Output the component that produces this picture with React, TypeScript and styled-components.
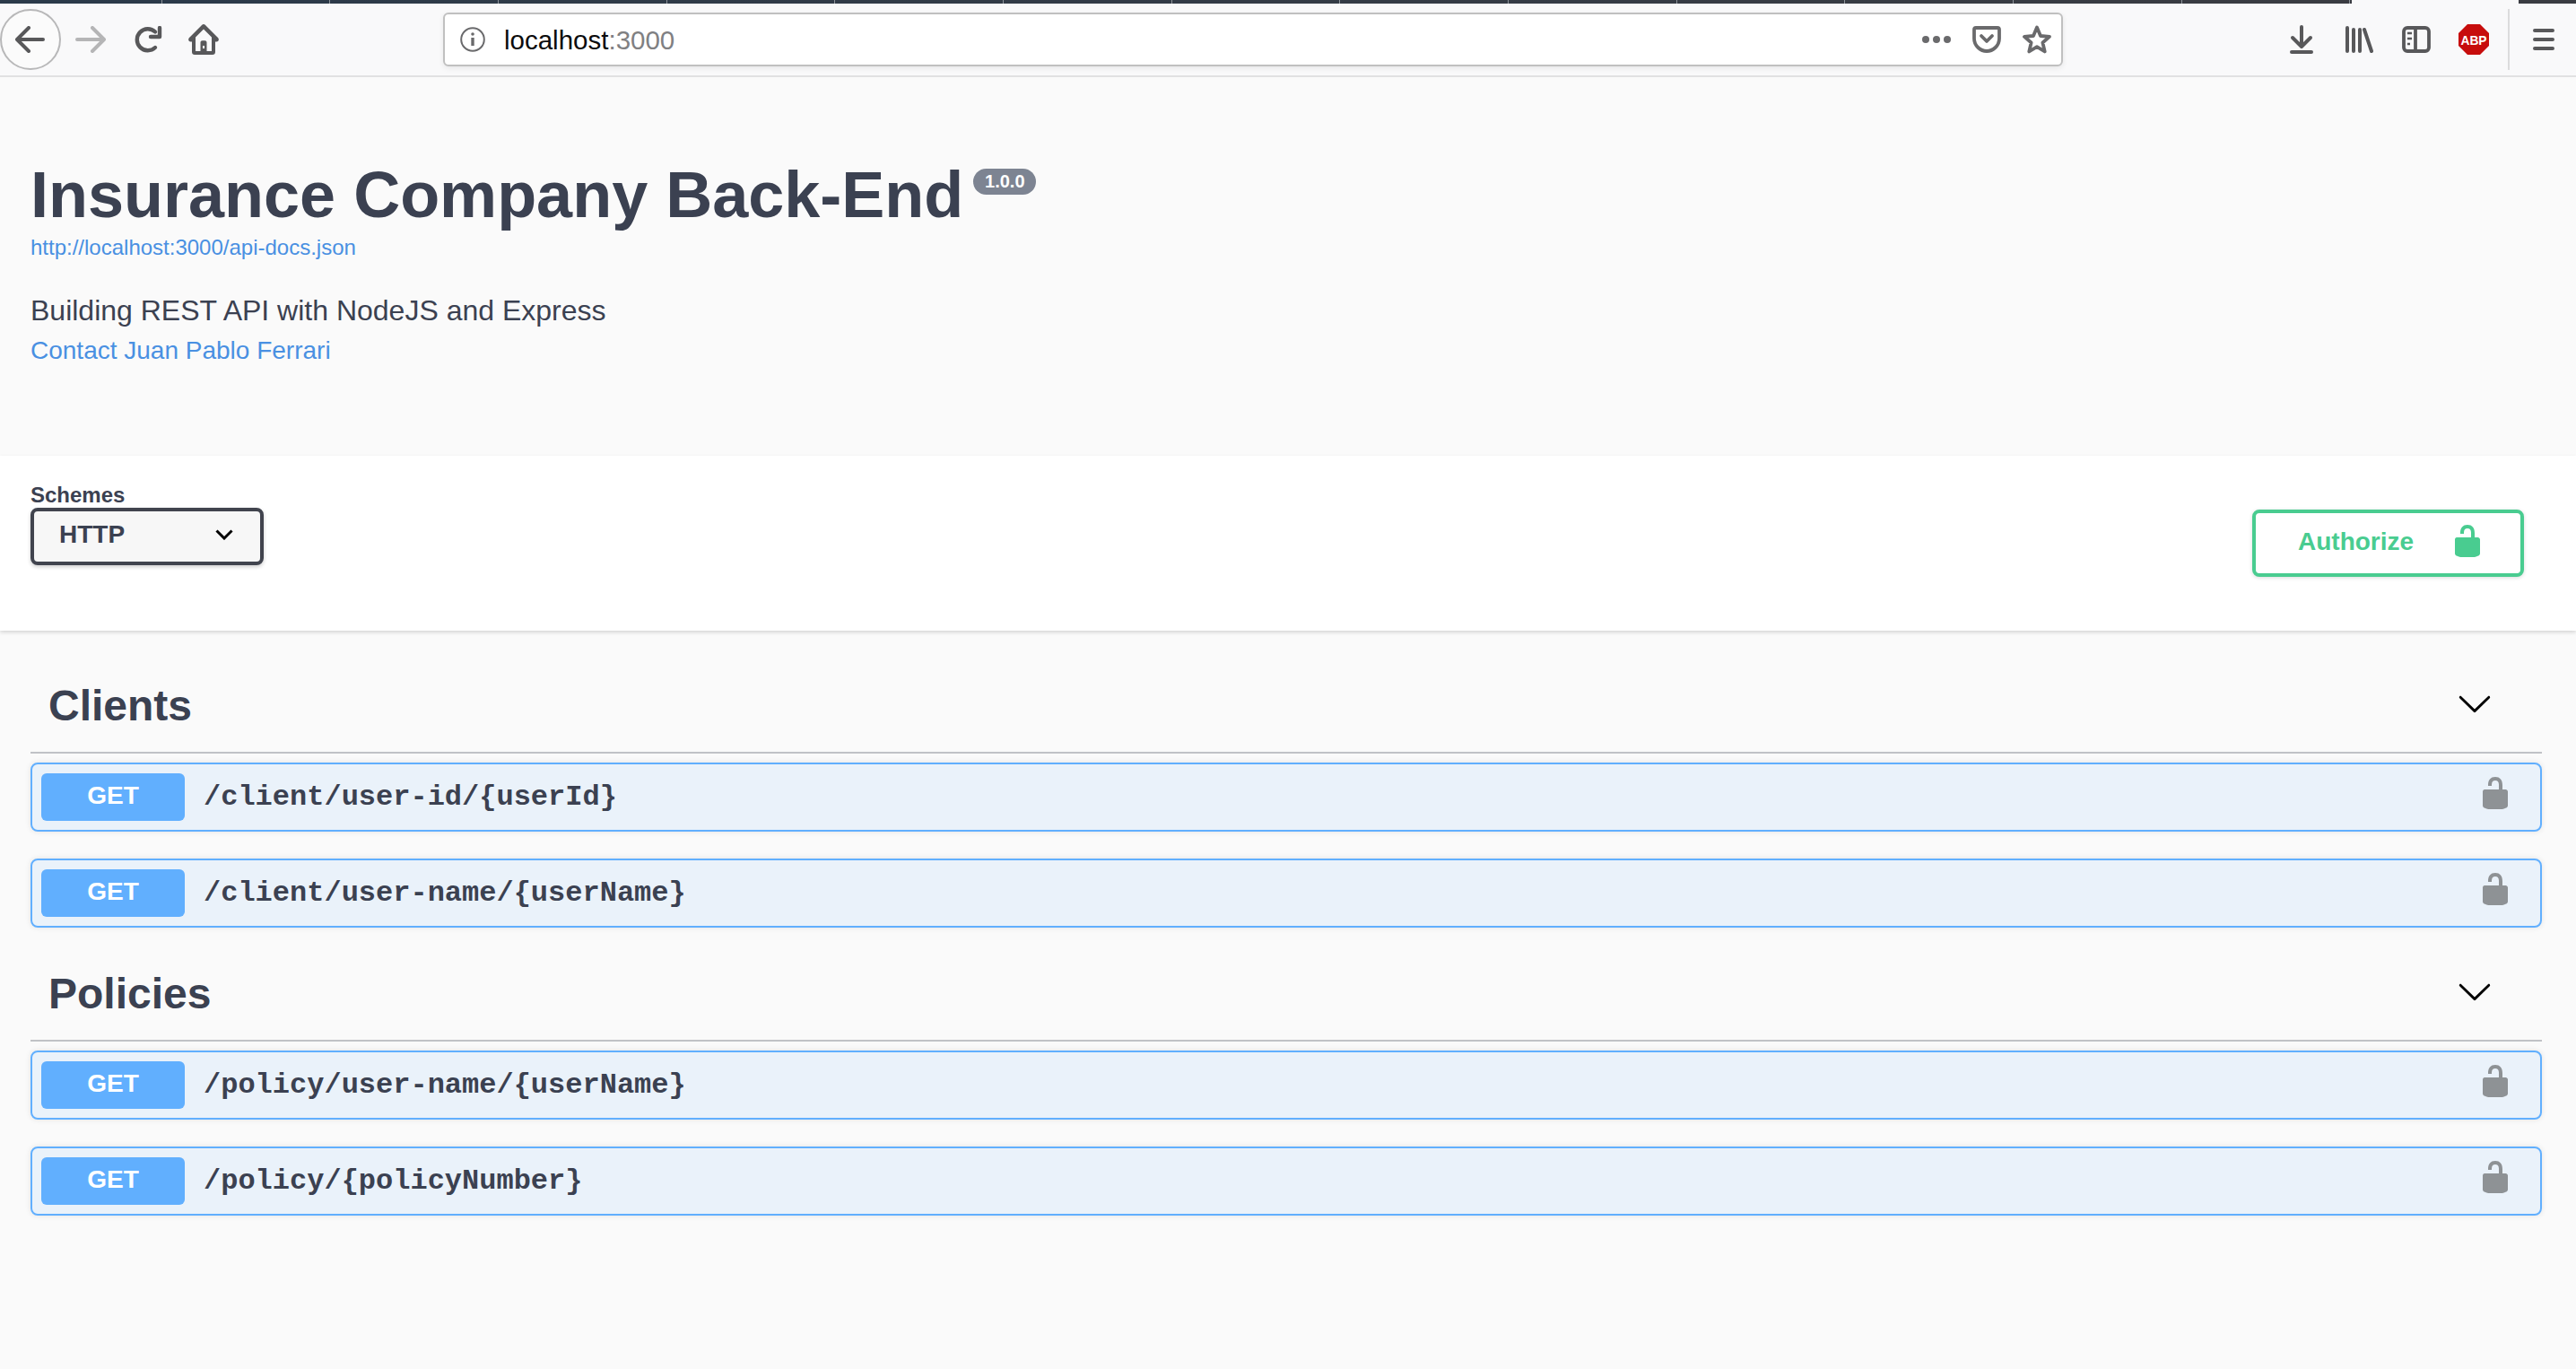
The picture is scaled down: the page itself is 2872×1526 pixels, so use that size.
import React from "react";
import styled, { createGlobalStyle } from "styled-components";

const Global = createGlobalStyle`
  html, body { margin: 0; padding: 0; background: #fafafa; }
  body { font-family: "Liberation Sans", Arial, sans-serif; color: #3b4151; }
`;

const Page = styled.div`
  min-height: 1526px;
  display: flex;
  flex-direction: column;
`;

const TabStrip = styled.div`
  height: 4px;
  display: flex;
  background: #f9f9fa;
`;
const TabRun = styled.div`
  width: 2622px;
  display: flex;
  background: linear-gradient(90deg, #2b3a4a, #3a3c42);
`;
const TabCell = styled.div<{ $w: number }>`
  width: ${(p) => p.$w}px;
  border-right: 1px solid #8d939a;
  box-sizing: border-box;
`;
const TabGap = styled.div`
  width: 186px;
`;
const TabEnd = styled.div`
  flex: 1;
  background: #3a3c42;
`;

const Toolbar = styled.div`
  height: 80px;
  box-sizing: content-box;
  background: #f9f9fa;
  border-bottom: 2px solid #e1e1e2;
  display: flex;
  align-items: center;
  position: relative;
`;
const BackCircle = styled.div`
  width: 68px;
  height: 68px;
  border: 2px solid #b8b8b9;
  border-radius: 50%;
  box-sizing: border-box;
  display: flex;
  align-items: center;
  justify-content: center;
  background: #fbfbfb;
`;
const NavSlot = styled.div<{ $w: number; $ml: number }>`
  width: ${(p) => p.$w}px;
  margin-left: ${(p) => p.$ml}px;
  height: 36px;
  display: flex;
  align-items: center;
  justify-content: center;
`;
const UrlBar = styled.div`
  margin-left: 250px;
  width: 1806px;
  height: 60px;
  box-sizing: border-box;
  background: #fff;
  border: 2px solid #c0c0c0;
  border-radius: 6px;
  box-shadow: 0 2px 6px rgba(0, 0, 0, 0.08);
  display: flex;
  align-items: center;
  padding: 0 11px 0 17px;
`;
const UrlText = styled.div`
  margin-left: 21px;
  padding-top: 1px;
  font-size: 29.5px;
  color: #0c0c0d;
  flex: 1;
`;
const UrlPort = styled.span`
  color: #808082;
`;
const UrlIcons = styled.div`
  display: flex;
  align-items: center;
  gap: 24px;
`;
const RightTools = styled.div`
  display: flex;
  align-items: center;
  margin-left: 253px;
`;
const ToolDivider = styled.div`
  width: 2px;
  height: 68px;
  background: #dcdcdd;
  margin: 0 26px 0 21px;
`;

const Info = styled.section`
  padding: 90px 34px 0;
  height: 332px;
  box-sizing: content-box;
`;
const TitleRow = styled.div`
  display: flex;
  align-items: flex-start;
`;
const Title = styled.h1`
  margin: 0;
  font-size: 72px;
  line-height: 82px;
  font-weight: 700;
  color: #3b4151;
`;
const VersionBadge = styled.span`
  margin: 12px 0 0 11px;
  height: 29px;
  width: 70px;
  border-radius: 15px;
  background: #7d8492;
  color: #fff;
  font-size: 20px;
  font-weight: 700;
  display: flex;
  align-items: center;
  justify-content: center;
`;
const BaseUrl = styled.a`
  display: block;
  margin-top: 4px;
  font-size: 24px;
  line-height: 28px;
  color: #4990e2;
`;
const Description = styled.p`
  margin: 35px 0 0;
  font-size: 32px;
  line-height: 42px;
  color: #3b4151;
`;
const Contact = styled.a`
  display: block;
  margin-top: 3px;
  font-size: 28px;
  line-height: 42px;
  color: #4990e2;
`;

const SchemeBar = styled.section`
  height: 195px;
  background: #fff;
  box-shadow: 0 2px 4px rgba(0, 0, 0, 0.15);
  display: flex;
  justify-content: space-between;
  padding: 30px 34px 0;
  box-sizing: border-box;
`;
const SchemeGroup = styled.div`
  display: flex;
  flex-direction: column;
`;
const SchemeLabel = styled.label`
  font-size: 24px;
  line-height: 28px;
  font-weight: 700;
  color: #3b4151;
`;
const Select = styled.div`
  width: 260px;
  height: 64px;
  box-sizing: border-box;
  border: 4px solid #41444e;
  border-radius: 8px;
  background: #f7f7f7;
  box-shadow: 0 2px 4px rgba(0, 0, 0, 0.2);
  display: flex;
  align-items: center;
  justify-content: space-between;
  padding: 0 30px 4px 28px;
  font-size: 28px;
  font-weight: 700;
  color: #3b4151;
`;
const AuthorizeButton = styled.button`
  margin: 30px 24px 0 0;
  width: 303px;
  height: 75px;
  box-sizing: border-box;
  border: 4px solid #49cc90;
  border-radius: 8px;
  background: #fff;
  box-shadow: 0 1px 4px rgba(0, 0, 0, 0.15);
  color: #49cc90;
  font-family: inherit;
  font-size: 28px;
  font-weight: 700;
  display: flex;
  align-items: center;
  padding: 0 0 0 47px;
  gap: 40px;
`;
const AuthorizeLabel = styled.span`
  padding-bottom: 4px;
`;
const AuthorizeLock = styled.span`
  display: flex;
  padding-bottom: 6px;
`;

const Sections = styled.main`
  padding: 40px 38px 0 34px;
  display: flex;
  flex-direction: column;
`;
const TagHeader = styled.div`
  height: 97px;
  box-sizing: border-box;
  border-bottom: 2px solid rgba(59, 65, 81, 0.3);
  display: flex;
  align-items: center;
  justify-content: space-between;
  padding: 0 55px 0 20px;
`;
const TagTitle = styled.h4`
  margin: 0 0 8px;
  font-size: 48px;
  line-height: 60px;
  font-weight: 700;
  color: #3b4151;
`;
const TagArrow = styled.span`
  display: flex;
  margin-bottom: 14px;
`;
const Opblock = styled.div`
  margin-top: 10px;
  margin-bottom: 30px;
  height: 77px;
  box-sizing: border-box;
  border: 2px solid #61affe;
  border-radius: 8px;
  background: rgba(97, 175, 254, 0.1);
  box-shadow: 0 0 6px rgba(0, 0, 0, 0.1);
  display: flex;
  align-items: center;
  padding: 0 30px 0 10px;
`;
const Row = styled(Opblock)<{ $first: boolean }>`
  margin-top: ${(p) => (p.$first ? 10 : 0)}px;
`;
const Method = styled.span`
  width: 160px;
  height: 53px;
  border-radius: 6px;
  background: #61affe;
  color: #fff;
  font-size: 28px;
  font-weight: 700;
  display: flex;
  align-items: center;
  justify-content: center;
  padding-bottom: 4px;
  box-sizing: border-box;
`;
const OpPath = styled.span`
  flex: 1;
  padding: 0 0 0 21px;
  font-family: "Liberation Mono", monospace;
  font-size: 32px;
  font-weight: 700;
  color: #3b4151;
`;
const RowLock = styled.span`
  display: flex;
  margin-bottom: 10px;
`;

const LOCK =
  "M15.8 8H14V5.6C14 2.703 12.665 1 10 1 7.334 1 6 2.703 6 5.6V6h2v-.801C8 3.754 8.797 3 10 3c1.203 0 2 .754 2 2.199V8H4c-.553 0-1 .646-1 1.199V17c0 .549.428 1.139.951 1.307l1.197.387C5.672 18.861 6.55 19 7.1 19h5.8c.549 0 1.428-.139 1.951-.307l1.196-.387c.524-.167.953-.757.953-1.306V9.199C17 8.646 16.352 8 15.8 8z";
const Lock = ({ color }: { color: string }) => (
  <svg width="40" height="40" viewBox="0 0 20 20">
    <path d={LOCK} fill={color} />
  </svg>
);
const Arrow = () => (
  <svg width="40" height="40" viewBox="0 0 20 20">
    <path
      fill="#000"
      d="M17.418 6.109c.272-.268.709-.268.979 0s.271.701 0 .969l-7.908 7.83c-.27.268-.707.268-.979 0l-7.908-7.83c-.27-.268-.27-.701 0-.969.271-.268.709-.268.979 0L10 13.25l7.418-7.141z"
    />
  </svg>
);

const G = "#58585a";
const IconBack = () => (
  <svg width="34" height="30" viewBox="0 0 34 30" fill="none" stroke={G} strokeWidth="4" strokeLinecap="round" strokeLinejoin="round">
    <path d="M31 15H3M15 2 2 15l13 13" />
  </svg>
);
const IconForward = () => (
  <svg width="34" height="30" viewBox="0 0 34 30" fill="none" stroke="#b5b5b6" strokeWidth="4" strokeLinecap="round" strokeLinejoin="round">
    <path d="M2 15h29M19 2l13 13-13 13" />
  </svg>
);
const IconReload = () => (
  <svg width="32" height="30" viewBox="0 0 32 30" fill="none" stroke={G} strokeWidth="4.4" strokeLinecap="round" strokeLinejoin="round">
    <path d="M24 6.500A12 12 0 1 0 24 24" />
    <path d="M29 2v10H19" />
  </svg>
);
const IconHome = () => (
  <svg width="34" height="34" viewBox="0 0 34 34">
    <path
      fill={G}
      fillRule="evenodd"
      d="M15 1c1.200-1.200 2.800-1.200 4 0l14 14c1.700 1.800.7 4.500-1.500 4.500H30V31c0 1.800-1.200 3-3 3H7c-1.800 0-3-1.200-3-3V19.500H2.500C.3 19.500-.7 16.800 1 15L15 1zm2 4.500L8 14.500V30h5.500V20.500c0-1.400.8-2.200 2.200-2.200h2.600c1.400 0 2.200.8 2.200 2.200V30H26V14.500L17 5.500zM16 24v3h2v-3h-2z"
    />
  </svg>
);
const IconInfo = () => (
  <svg width="28" height="28" viewBox="0 0 28 28" fill="none" stroke="#6a6a6c" strokeWidth="2">
    <circle cx="14" cy="14" r="12.800" />
    <path d="M14 12v9" strokeWidth="3.400" />
    <circle cx="14" cy="8" r="1.800" fill="#6a6a6c" stroke="none" />
  </svg>
);
const IconDots = () => (
  <svg width="32" height="10" viewBox="0 0 32 10" fill="#6a6a6c">
    <circle cx="4" cy="5" r="4" />
    <circle cx="16" cy="5" r="4" />
    <circle cx="28" cy="5" r="4" />
  </svg>
);
const IconPocket = () => (
  <svg width="32" height="30" viewBox="0 0 32 30" fill="none" stroke="#6a6a6c" strokeWidth="3.800" strokeLinecap="round" strokeLinejoin="round">
    <path d="M4 2h24c1.200 0 2 .8 2 2v10c0 8-7 14-14 14S2 22 2 14V4c0-1.200.8-2 2-2z" />
    <path d="m10 11 6 6 6-6" />
  </svg>
);
const IconStar = () => (
  <svg width="32" height="32" viewBox="0 0 32 32" fill="none" stroke="#6a6a6c" strokeWidth="3.800" strokeLinejoin="round">
    <path d="m16 2.500 4 9.500 10 .9-7.600 6.600 2.300 10L16 24.200 7.300 29.500l2.300-10L2 12.900l10-.9z" />
  </svg>
);
const IconDownload = () => (
  <svg width="26" height="32" viewBox="0 0 26 32" fill="none" stroke={G} strokeWidth="4" strokeLinecap="round" strokeLinejoin="round">
    <path d="M13 2v22M3 14l10 10 10-10" />
    <path d="M2 30h22" />
  </svg>
);
const IconLibrary = () => (
  <svg width="32" height="30" viewBox="0 0 32 30" fill="none" stroke={G} strokeWidth="4" strokeLinecap="round">
    <path d="M2 2v26M9 4v24M16 4v24M21 4l8 24" />
  </svg>
);
const IconSidebar = () => (
  <svg width="32" height="30" viewBox="0 0 32 30" fill="none" stroke={G} strokeWidth="3.800" strokeLinejoin="round">
    <rect x="2" y="2" width="28" height="26" rx="4" />
    <path d="M15 2v26" />
    <path d="M6 8h5M6 14h5M6 20h3" strokeWidth="2.400" />
  </svg>
);
const AbpText = styled.text`
  font-family: "Liberation Sans", sans-serif;
  font-size: 15px;
  font-weight: 700;
  fill: #fff;
`;
const IconAbp = () => (
  <svg width="34" height="34" viewBox="0 0 34 34">
    <path fill="#c70d0c" d="M10 0h14l10 10v14L24 34H10L0 24V10z" />
    <AbpText x="17" y="22.500" textAnchor="middle" textLength="29" lengthAdjust="spacingAndGlyphs">ABP</AbpText>
  </svg>
);
const IconMenu = () => (
  <svg width="24" height="26" viewBox="0 0 24 26" fill="none" stroke={G} strokeWidth="4" strokeLinecap="round">
    <path d="M2 3h20M2 13h20M2 23h20" />
  </svg>
);

const tags = [
  { name: "Clients", paths: ["/client/user-id/{userId}", "/client/user-name/{userName}"] },
  { name: "Policies", paths: ["/policy/user-name/{userName}", "/policy/{policyNumber}"] },
];

const tabWidths = [181, 187, 188, 188, 187, 188, 188, 187, 188, 188, 187, 188, 188, 187];

export default function App() {
  return (
    <Page>
      <Global />
      <TabStrip>
        <TabRun>
          {tabWidths.map((w, i) => (
            <TabCell key={i} $w={w} />
          ))}
        </TabRun>
        <TabGap />
        <TabEnd />
      </TabStrip>
      <Toolbar>
        <BackCircle>
          <IconBack />
        </BackCircle>
        <NavSlot $w={34} $ml={16}>
          <IconForward />
        </NavSlot>
        <NavSlot $w={32} $ml={31}>
          <IconReload />
        </NavSlot>
        <NavSlot $w={34} $ml={29}>
          <IconHome />
        </NavSlot>
        <UrlBar>
          <IconInfo />
          <UrlText>
            localhost<UrlPort>:3000</UrlPort>
          </UrlText>
          <UrlIcons>
            <IconDots />
            <IconPocket />
            <IconStar />
          </UrlIcons>
        </UrlBar>
        <RightTools>
          <IconDownload />
          <NavSlot $w={32} $ml={36}>
            <IconLibrary />
          </NavSlot>
          <NavSlot $w={32} $ml={31}>
            <IconSidebar />
          </NavSlot>
          <NavSlot $w={34} $ml={31}>
            <IconAbp />
          </NavSlot>
          <ToolDivider />
          <IconMenu />
        </RightTools>
      </Toolbar>
      <Info>
        <TitleRow>
          <Title>Insurance Company Back-End</Title>
          <VersionBadge>1.0.0</VersionBadge>
        </TitleRow>
        <BaseUrl>http://localhost:3000/api-docs.json</BaseUrl>
        <Description>Building REST API with NodeJS and Express</Description>
        <Contact>Contact Juan Pablo Ferrari</Contact>
      </Info>
      <SchemeBar>
        <SchemeGroup>
          <SchemeLabel>Schemes</SchemeLabel>
          <Select>
            HTTP
            <svg width="20" height="12" viewBox="0 0 20 12" fill="none" stroke="#000" strokeWidth="3">
              <path d="m1.500 1.500 8.500 8.500 8.500-8.500" />
            </svg>
          </Select>
        </SchemeGroup>
        <AuthorizeButton>
          <AuthorizeLabel>Authorize</AuthorizeLabel>
          <AuthorizeLock>
            <Lock color="#49cc90" />
          </AuthorizeLock>
        </AuthorizeButton>
      </SchemeBar>
      <Sections>
        {tags.map((t) => (
          <section key={t.name}>
            <TagHeader>
              <TagTitle>{t.name}</TagTitle>
              <TagArrow>
                <Arrow />
              </TagArrow>
            </TagHeader>
            {t.paths.map((p, i) => (
              <Row key={p} $first={i === 0}>
                <Method>GET</Method>
                <OpPath>{p}</OpPath>
                <RowLock>
                  <Lock color="#8e9295" />
                </RowLock>
              </Row>
            ))}
          </section>
        ))}
      </Sections>
    </Page>
  );
}
